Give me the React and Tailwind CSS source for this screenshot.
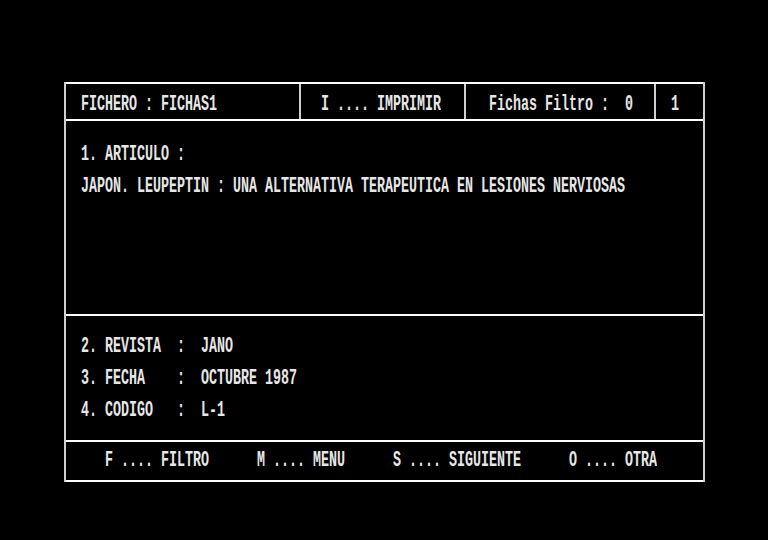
import React from "react";

const T = ({ children, className = "" }) => (
  <span className={"inline-block whitespace-pre scale-y-[1.6] " + className}>{children}</span>
);

const HLine = () => <div className="h-[2px] bg-white w-full" />;
const VLine = () => <div className="w-[2px] self-stretch bg-[#d0d0d0]" />;

export default function App() {
  return (
    <div
      className="w-[768px] h-[540px] bg-black text-[#e6e6e6] font-bold text-[13.333px] leading-[16px] overflow-hidden"
      style={{ fontFamily: '"Liberation Mono", "DejaVu Sans Mono", monospace' }}
    >
      <div className="pt-[82px] pl-[64px]">
        <div className="w-[641px] flex">
          <VLine />
          <div className="flex-1 flex flex-col">
            <HLine />
            {/* header */}
            <div className="h-[35px] flex">
              <div className="w-[233px] pl-[15px] pt-[6px] flex items-center">
                <T>FICHERO : FICHAS1</T>
              </div>
              <VLine />
              <div className="w-[163px] pl-[20px] pt-[6px] flex items-center">
                <T>I .... IMPRIMIR</T>
              </div>
              <VLine />
              <div className="w-[188px] pl-[23px] pt-[6px] flex items-center">
                <T>{"Fichas Filtro :  0"}</T>
              </div>
              <VLine />
              <div className="flex-1 pl-[15px] pt-[6px] flex items-center">
                <T>1</T>
              </div>
            </div>
            <HLine />
            {/* section 1 */}
            <div className="h-[193px] pl-[15px] pt-[18px] flex flex-col">
              <div className="h-[32px] flex items-center">
                <T>1. ARTICULO :</T>
              </div>
              <div className="h-[32px] flex items-center">
                <T>JAPON. LEUPEPTIN : UNA ALTERNATIVA TERAPEUTICA EN LESIONES NERVIOSAS</T>
              </div>
            </div>
            <HLine />
            {/* section 2 */}
            <div className="h-[124px] pl-[15px] pt-[15px] flex flex-col">
              <div className="h-[32px] flex items-center">
                <T>{"2. REVISTA  :  JANO"}</T>
              </div>
              <div className="h-[32px] flex items-center">
                <T>{"3. FECHA    :  OCTUBRE 1987"}</T>
              </div>
              <div className="h-[32px] flex items-center">
                <T>{"4. CODIGO   :  L-1"}</T>
              </div>
            </div>
            <HLine />
            {/* footer */}
            <div className="h-[38px] pl-[39px] flex items-center pb-[1px]">
              <T>{"F .... FILTRO      M .... MENU      S .... SIGUIENTE      O .... OTRA"}</T>
            </div>
            <HLine />
          </div>
          <VLine />
        </div>
      </div>
    </div>
  );
}
